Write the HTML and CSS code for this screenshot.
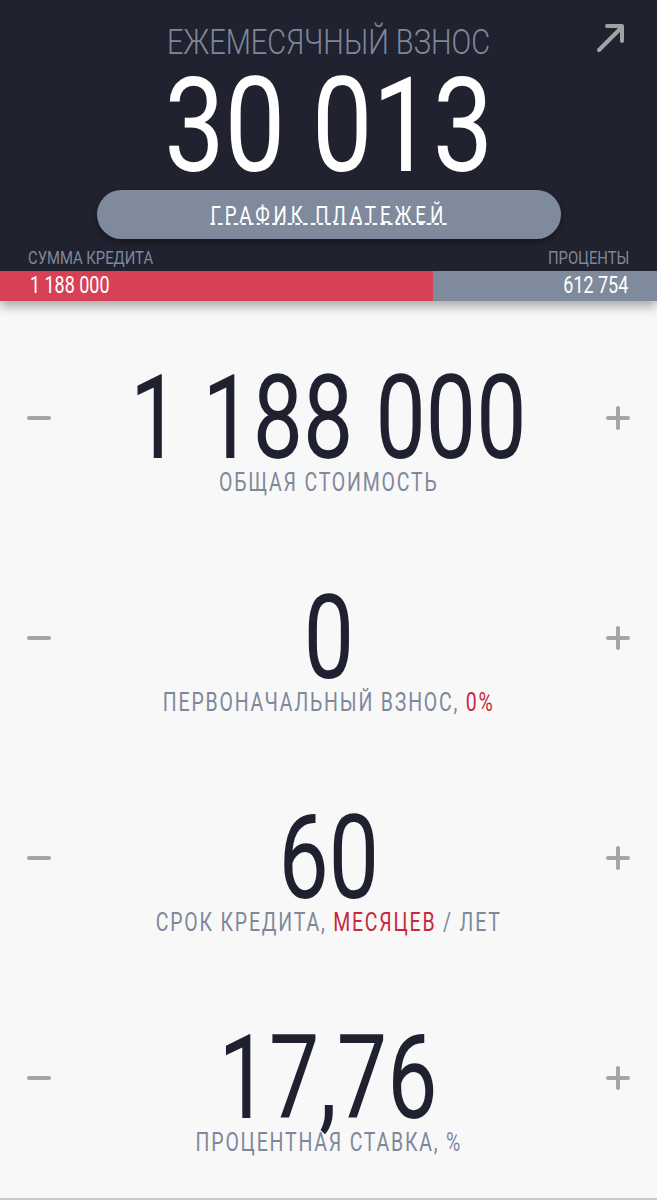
FILE: index.html
```html
<!DOCTYPE html>
<html lang="ru">
<head>
    <meta charset="UTF-8">
    <meta name="viewport" content="width=device-width, initial-scale=1.0">
    <title>Кредитный калькулятор</title>
    <link rel="stylesheet" href="styles.css">
</head>
<body>
<header class="summary">
    <a class="share" href="#" aria-label="Поделиться">
        <svg width="34" height="34" viewBox="0 0 34 34">
            <path d="M6 30 L29 7 M14 6 H29 V21" fill="none" stroke="#a3a3a3" stroke-width="4" stroke-linecap="round" stroke-linejoin="round"/>
        </svg>
    </a>
    <div class="summary-title"><span class="cond">ЕЖЕМЕСЯЧНЫЙ ВЗНОС</span></div>
    <div class="summary-value"><span class="cond">30 013</span></div>
    <button class="schedule-btn"><span class="cond">ГРАФИК ПЛАТЕЖЕЙ</span></button>
    <div class="split-labels">
        <span class="cond left">СУММА КРЕДИТА</span>
        <span class="cond right">ПРОЦЕНТЫ</span>
    </div>
    <div class="split-bar">
        <div class="bar-loan" style="width: 65.97%;"><span class="cond left">1 188 000</span></div>
        <div class="bar-interest"><span class="cond right">612 754</span></div>
    </div>
</header>

<main class="params">
    <div class="param">
        <button class="step minus" aria-label="Меньше"></button>
        <div class="param-value"><span class="cond">1 188 000</span></div>
        <button class="step plus" aria-label="Больше"></button>
        <div class="param-label"><span class="cond">ОБЩАЯ СТОИМОСТЬ</span></div>
    </div>
    <div class="param">
        <button class="step minus" aria-label="Меньше"></button>
        <div class="param-value"><span class="cond">0</span></div>
        <button class="step plus" aria-label="Больше"></button>
        <div class="param-label"><span class="cond">ПЕРВОНАЧАЛЬНЫЙ ВЗНОС, <span class="accent">0%</span></span></div>
    </div>
    <div class="param">
        <button class="step minus" aria-label="Меньше"></button>
        <div class="param-value"><span class="cond">60</span></div>
        <button class="step plus" aria-label="Больше"></button>
        <div class="param-label"><span class="cond">СРОК КРЕДИТА, <span class="accent">МЕСЯЦЕВ</span> / ЛЕТ</span></div>
    </div>
    <div class="param">
        <button class="step minus" aria-label="Меньше"></button>
        <div class="param-value"><span class="cond">17,76</span></div>
        <button class="step plus" aria-label="Больше"></button>
        <div class="param-label"><span class="cond">ПРОЦЕНТНАЯ СТАВКА, %</span></div>
    </div>
</main>
</body>
</html>
```

FILE: styles.css
```css
body {
    font-family: Roboto, "Liberation Sans", sans-serif;
    background-color: #f8f8f8;
    margin: 0;
    padding: 0;
}

/* no narrow face is installed, so squeeze the glyphs */
.cond {
    display: inline-block;
    white-space: nowrap;
    transform: scaleX(0.78);
}

.cond.left {
    transform-origin: left center;
}

.cond.right {
    transform-origin: right center;
}

/* Top block with the monthly payment */
.summary {
    position: relative;
    background-color: #20222f;
    padding-top: 25px;
    text-align: center;
    box-shadow: 0 6px 10px rgba(0, 0, 0, 0.3);
}

.share {
    position: absolute;
    top: 20px;
    right: 30px;
}

.summary-title {
    color: #7f889b;
    font-size: 35px;
    font-weight: 300;
    line-height: 35px;
}

.summary-title .cond {
    transform: scaleX(0.83);
}

.summary-value {
    color: #ffffff;
    font-size: 132px;
    line-height: 110px;
    margin-top: 11px;
}

.summary-value .cond {
    transform: scaleX(0.815);
}

.schedule-btn {
    display: block;
    width: 464px;
    height: 49px;
    margin: 9px auto 0;
    padding: 0;
    border: none;
    border-radius: 25px;
    background-color: #7f8a9c;
    color: #ffffff;
    font-family: inherit;
    font-size: 24px;
    letter-spacing: 5px;
    box-shadow: 0 3px 6px rgba(0, 0, 0, 0.35);
    cursor: pointer;
}

.schedule-btn .cond {
    text-decoration: underline dashed 1.5px;
    text-underline-offset: 1px;
}

.split-labels {
    display: flex;
    justify-content: space-between;
    padding: 10px 28px 4px;
    color: #7f889b;
    font-size: 19px;
    line-height: 18px;
}

.split-bar {
    display: flex;
    height: 30px;
    color: #ffffff;
    font-size: 23px;
    line-height: 30px;
}

.bar-loan {
    background-color: #d84155;
    text-align: left;
    padding-left: 30px;
    box-sizing: border-box;
}

.bar-interest {
    flex: 1;
    background-color: #7f8a9c;
    text-align: right;
    padding-right: 29px;
}

/* Adjustable loan parameters */
.params {
    padding-top: 19px;
    border-bottom: 2px solid #c9c9c9;
}

.param {
    display: grid;
    grid-template-columns: 24px 1fr 24px;
    align-items: center;
    align-content: center;
    height: 220px;
    padding: 0 27px;
}

.param:last-child {
    height: 218px;
    align-content: start;
    padding-top: 46px;
    box-sizing: border-box;
}

.param-value {
    color: #1f2130;
    font-size: 117px;
    line-height: 104px;
    text-align: center;
}

.param-value .cond {
    transform: scaleX(0.765);
}

.param-label {
    grid-column: 1 / 4;
    color: #7f889b;
    font-size: 25px;
    line-height: 25px;
    letter-spacing: 2.3px;
    text-align: center;
}

.accent {
    color: #c8283b;
}

.step {
    position: relative;
    width: 24px;
    height: 24px;
    padding: 0;
    border: none;
    background: none;
    cursor: pointer;
}

.step::before,
.step::after {
    content: "";
    position: absolute;
    background-color: #a5a5a5;
    border-radius: 2px;
}

.step::before {
    left: 0;
    top: 10px;
    width: 24px;
    height: 4px;
}

.minus::after {
    display: none;
}

.plus::after {
    left: 10px;
    top: 0;
    width: 4px;
    height: 24px;
}
```
